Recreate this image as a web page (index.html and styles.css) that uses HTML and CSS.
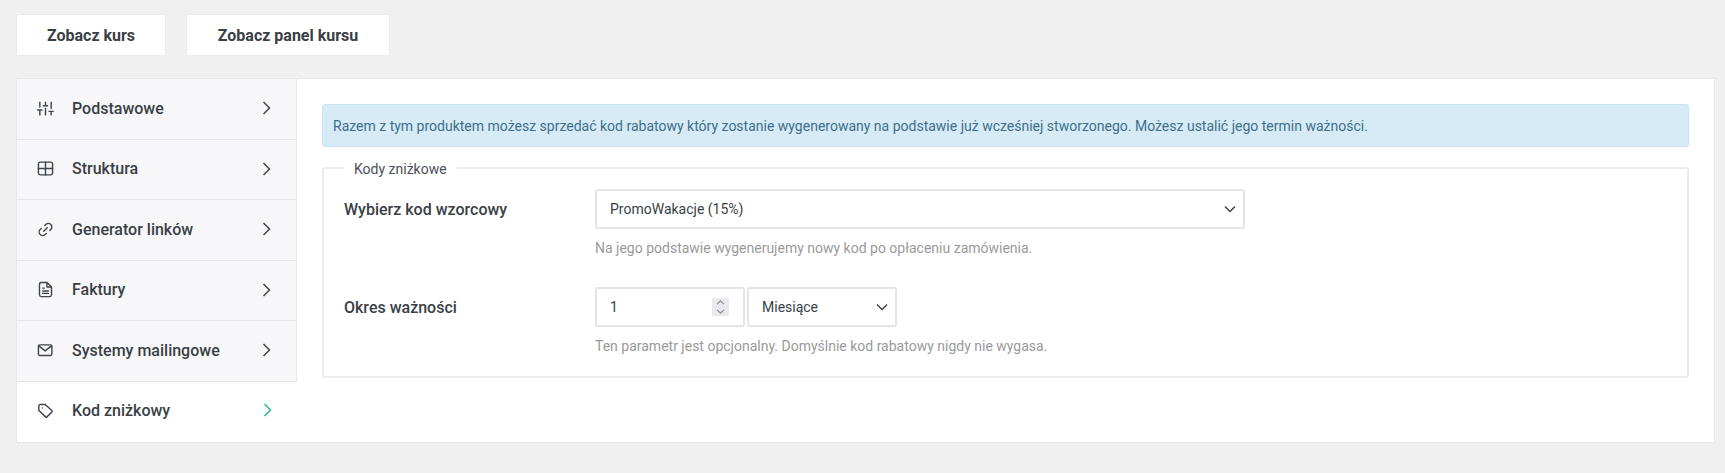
FILE: index.html
```html
<!DOCTYPE html>
<html lang="pl">
<head>
<meta charset="utf-8">
<title>Kod zniżkowy</title>
<link rel="stylesheet" href="styles.css">
</head>
<body>
<div class="actions">
  <a class="btn btn-course">Zobacz kurs</a>
  <a class="btn btn-panel">Zobacz panel kursu</a>
</div>
<div class="panel">
  <nav class="side">
    <a class="item">
      <svg class="ico" viewBox="0 0 24 24"><path d="M4 21v-7M4 10V3M12 21v-9M12 8V3M20 21v-5M20 12V3M1 14h6M9 8h6M17 16h6"/></svg>
      <span class="item-label">Podstawowe</span>
      <svg class="chev" viewBox="0 0 12 16"><path d="M2.5 2l6 6-6 6"/></svg>
    </a>
    <a class="item">
      <svg class="ico" viewBox="0 0 24 24"><rect x="2" y="3" width="20" height="18" rx="2.5"/><path d="M2 12h20M12 3v18"/></svg>
      <span class="item-label">Struktura</span>
      <svg class="chev" viewBox="0 0 12 16"><path d="M2.5 2l6 6-6 6"/></svg>
    </a>
    <a class="item">
      <svg class="ico" viewBox="0 0 24 24"><path d="M9.5 14.5l5-5M11 6.5l1.5-1.5a4.9 4.9 0 0 1 7 7L18 13.5M13 17.5L11.5 19a4.9 4.9 0 0 1-7-7L6 10.5"/></svg>
      <span class="item-label">Generator linków</span>
      <svg class="chev" viewBox="0 0 12 16"><path d="M2.5 2l6 6-6 6"/></svg>
    </a>
    <a class="item">
      <svg class="ico" viewBox="0 0 24 24"><path d="M14 2H6a2.500 2.500 0 0 0-2.500 2.500v15A2.500 2.500 0 0 0 6 22h12a2.500 2.500 0 0 0 2.500-2.500V8.500zM14 2v6.500h6.500M8 10h2.500M8 14h8M8 17.500h8"/></svg>
      <span class="item-label">Faktury</span>
      <svg class="chev" viewBox="0 0 12 16"><path d="M2.500 2l6 6-6 6"/></svg>
    </a>
    <a class="item">
      <svg class="ico" viewBox="0 0 24 24"><rect x="2" y="4" width="19" height="15" rx="2"/><path d="M2.500 5.500l9 7 9-7"/></svg>
      <span class="item-label">Systemy mailingowe</span>
      <svg class="chev" viewBox="0 0 12 16"><path d="M2.500 2l6 6-6 6"/></svg>
    </a>
    <a class="item item-active">
      <svg class="ico" viewBox="0 0 24 24"><path d="M2.500 5.500v6l9.500 9.500a1.500 1.500 0 0 0 2 0l7-7a1.500 1.500 0 0 0 0-2L11.500 3.500h-7a2 2 0 0 0-2 2z"/><path d="M7.500 8.500h.01"/></svg>
      <span class="item-label">Kod zniżkowy</span>
      <svg class="chev" viewBox="0 0 12 16"><path d="M2.500 2l6 6-6 6"/></svg>
    </a>
  </nav>
  <main class="content">
    <div class="alert">Razem z tym produktem możesz sprzedać kod rabatowy który zostanie wygenerowany na podstawie już wcześniej stworzonego. Możesz ustalić jego termin ważności.</div>
    <fieldset class="group">
      <legend class="group-title">Kody zniżkowe</legend>
      <div class="row row-first">
        <label class="row-label">Wybierz kod wzorcowy</label>
        <div class="row-body">
          <div class="ctl ctl-wide">
            <select class="field"><option>PromoWakacje (15%)</option></select>
            <svg class="caret" viewBox="0 0 12 8"><path d="M1 1.500l5 5 5-5"/></svg>
          </div>
          <p class="hint">Na jego podstawie wygenerujemy nowy kod po opłaceniu zamówienia.</p>
        </div>
      </div>
      <div class="row">
        <label class="row-label">Okres ważności</label>
        <div class="row-body">
          <div class="pair">
            <div class="ctl ctl-num">
              <input class="field" type="text" value="1">
              <span class="spin"><svg viewBox="0 0 10 16"><path d="M2 5.500l3-3 3 3M2 10.500l3 3 3-3"/></svg></span>
            </div>
            <div class="ctl ctl-unit">
              <select class="field"><option>Miesiące</option></select>
              <svg class="caret" viewBox="0 0 12 8"><path d="M1 1.500l5 5 5-5"/></svg>
            </div>
          </div>
          <p class="hint">Ten parametr jest opcjonalny. Domyślnie kod rabatowy nigdy nie wygasa.</p>
        </div>
      </div>
    </fieldset>
  </main>
</div>
</body>
</html>
```
FILE: styles.css
```css
* { box-sizing: border-box; }
html, body { margin: 0; height: 100%; }
body {
  background: #f0f0f0;
  font-family: Roboto, "Liberation Sans", sans-serif;
  color: #393f45;
  overflow: hidden;
}
.actions {
  display: flex;
  gap: 20px;
  padding: 14px 16px 0;
}
.btn {
  display: flex;
  align-items: center;
  justify-content: center;
  height: 42px;
  background: #fff;
  border: 1px solid #eaeaea;
  border-radius: 2px;
  font-size: 16px;
  font-weight: 700;
  color: #393f45;
}
.btn-course { width: 150px; }
.btn-panel { width: 204px; }
.panel {
  display: flex;
  margin: 22px 10px 0 16px;
  height: 365px;
  background: #fff;
  border: 1px solid #e8e8e8;
}
.side {
  width: 280px;
  flex: none;
  display: flex;
  flex-direction: column;
  background: #f7f7f9;
  border-right: 1px solid #e8e8e8;
}
.item {
  display: flex;
  align-items: center;
  height: 60.500px;
  padding: 0 23px 1px 20px;
  border-bottom: 1px solid #e7e7e9;
  font-size: 16px;
  font-weight: 500;
  color: #393f45;
}
.item-active {
  flex: 1;
  padding-bottom: 3px;
  background: #fff;
  border-bottom: 0;
  margin-right: -1px;
}
.ico {
  width: 17px;
  height: 17px;
  flex: none;
  fill: none;
  stroke: #3f454b;
  stroke-width: 2;
  stroke-linecap: round;
  stroke-linejoin: round;
}
.item-label { flex: 1; margin-left: 18px; }
.chev {
  width: 12px;
  height: 16px;
  flex: none;
  fill: none;
  stroke: #3f454b;
  stroke-width: 1.500;
}
.item-active .chev { stroke: #2bb596; }
.content {
  flex: 1;
  min-width: 0;
  padding: 25px 25px 0 25px;
}
.alert {
  height: 43px;
  display: flex;
  align-items: center;
  padding: 0 10px;
  background: #d6ebf5;
  border: 1px solid #c9e5f1;
  border-radius: 3px;
  font-size: 14px;
  color: #3d6f8c;
}
.group {
  margin: 10px 0 0;
  padding: 10px 20px 0;
  height: 221px;
  min-width: 0;
  border: 2px solid #ececec;
  border-radius: 3px;
}
.group-title {
  margin-left: 0;
  padding: 2px 10px 0;
  font-size: 14px;
  line-height: 20px;
  color: #4a5056;
}
.row { display: flex; }
.row-first { margin-bottom: 30px; }
.row-label {
  width: 251px;
  flex: none;
  padding-top: 11px;
  font-size: 16px;
  line-height: 20px;
  font-weight: 500;
  color: #393f45;
}
.row-body { flex: 1; }
.ctl { position: relative; height: 40px; }
.ctl-wide { width: 650px; }
.ctl-num { width: 150px; }
.ctl-unit { width: 150px; }
.pair { display: flex; gap: 2px; }
.field {
  display: block;
  width: 100%;
  height: 100%;
  padding: 0 13px;
  background: #fff;
  border: 2px solid #e4e4e6;
  border-radius: 3px;
  font-family: inherit;
  font-size: 14px;
  color: #393f45;
  appearance: none;
  outline: none;
}
.caret {
  position: absolute;
  right: 9px;
  top: 16px;
  width: 12px;
  height: 8px;
  fill: none;
  stroke: #444;
  stroke-width: 1.500;
}
.spin {
  position: absolute;
  right: 16px;
  top: 11px;
  width: 17px;
  height: 18px;
  display: flex;
  background: #e9e9ee;
}
.spin svg {
  width: 100%;
  height: 100%;
  fill: none;
  stroke: #8b8b8f;
  stroke-width: 1;
}
.hint {
  margin: 10px 0 0;
  font-size: 14px;
  line-height: 18px;
  color: #9a9a9a;
}
```
